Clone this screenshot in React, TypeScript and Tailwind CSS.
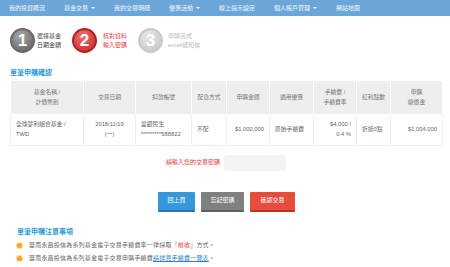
import React from 'react';

const navItems = [
  { label: '我的投資概況', caret: false },
  { label: '基金交易', caret: true },
  { label: '我的交易明細', caret: false },
  { label: '優惠活動', caret: true },
  { label: '線上提示設定', caret: false },
  { label: '個人帳戶管理', caret: true },
  { label: '網站地圖', caret: false },
];

const Caret = () => (
  <span className="ml-[3px] inline-block h-0 w-0 border-x-[2px] border-t-[2px] border-x-transparent border-t-white/90 align-middle" />
);

type StepProps = {
  num: number;
  lines: [string, string];
  tone: 'done' | 'active' | 'todo';
  className?: string;
};

const Step = ({ num, lines, tone, className }: StepProps) => {
  const circle =
    tone === 'done'
      ? 'border-[#6a6a6a] bg-[radial-gradient(circle_at_40%_30%,#a8a8a8,#5c5c5c)]'
      : tone === 'active'
      ? 'border-[#b52020] bg-[radial-gradient(circle_at_40%_30%,#f07070,#c42424)]'
      : 'border-[#c8c8c8] bg-[radial-gradient(circle_at_40%_30%,#e6e6e6,#c4c4c4)]';
  const text =
    tone === 'done' ? 'text-[#444]' : tone === 'active' ? 'text-[#e53935]' : 'text-[#bdbdbd]';
  return (
    <div className={`flex items-center ${className ?? ''}`}>
      <div
        className={`flex h-[25px] w-[25px] items-center justify-center rounded-full border-[2px] ${circle} text-[17px] font-bold leading-none text-white`}
      >
        {num}
      </div>
      <div className={`text-[6px] leading-[9px] ${text}`}>
        <div>{lines[0]}</div>
        <div>{lines[1]}</div>
      </div>
    </div>
  );
};

const cols = [73, 52, 56, 35, 43, 44, 43, 34, 52];

const headers: React.ReactNode[] = [
  <>基金名稱 /<br />計價幣別</>,
  '交易日期',
  '扣款帳號',
  '配息方式',
  '申購金額',
  '適用優惠',
  <>手續費 /<br />手續費率</>,
  '紅利點數',
  <>申購<br />總價金</>,
];

export default function App() {
  return (
    <div
      className="min-h-screen w-[450px] bg-white text-[#555]"
      style={{ fontFamily: '"Liberation Sans", "Noto Sans CJK TC", sans-serif' }}
    >
      {/* nav */}
      <div className="flex h-[16px] items-center gap-[19px] bg-[#6ca6d9] pl-[9px] text-[6px] text-white/90">
        {navItems.map((n) => (
          <span key={n.label} className="flex items-center whitespace-nowrap">
            {n.label}
            {n.caret && <Caret />}
          </span>
        ))}
      </div>

      {/* steps */}
      <div className="mt-[12px] flex items-center pl-[10px]">
        <Step num={1} lines={['選擇基金', '日期金額']} tone="done" className="w-[62px] gap-[2px]" />
        <Step num={2} lines={['核對資料', '輸入密碼']} tone="active" className="w-[66px] gap-[6px]" />
        <Step num={3} lines={['申購完成', 'email通知信']} tone="todo" className="gap-[5px]" />
      </div>

      {/* title */}
      <div className="ml-[10px] mt-[15px] text-[7px] font-bold leading-[10px] text-[#2a9ad6]">單筆申購確認</div>

      {/* table */}
      <table className="ml-[10px] mt-[3px] w-[432px] table-fixed border-collapse text-[5.8px] leading-[10px]">
        <colgroup>
          {cols.map((w, i) => (
            <col key={i} style={{ width: w }} />
          ))}
        </colgroup>
        <thead>
          <tr className="h-[32px] bg-[#eeeeee] text-[#777]">
            {headers.map((h, i) => (
              <th key={i} className="border-x border-white text-center font-normal">
                {h}
              </th>
            ))}
          </tr>
        </thead>
        <tbody>
          <tr className="h-[32px] border border-[#eeeeee] text-[#666]">
            <td className="border border-[#eeeeee] pl-[5px] text-left">全球夢利組合基金 /<br />TWD</td>
            <td className="border border-[#eeeeee] text-center">2018/11/19<br />(一)</td>
            <td className="border border-[#eeeeee] pl-[5px] text-left">華銀民生<br />*********588822</td>
            <td className="border border-[#eeeeee] pl-[5px] text-left">不配</td>
            <td className="border border-[#eeeeee] pr-[5px] text-right">$1,000,000</td>
            <td className="border border-[#eeeeee] pl-[5px] text-left">原始手續費</td>
            <td className="border border-[#eeeeee] pr-[5px] text-right">$4,000 /<br />0.4 %</td>
            <td className="border border-[#eeeeee] pl-[5px] text-left">折抵0點</td>
            <td className="border border-[#eeeeee] pr-[5px] text-right">$1,004,000</td>
          </tr>
        </tbody>
      </table>

      {/* password */}
      <div className="mt-[9px] flex items-center justify-center gap-[4px] pl-[2px]">
        <span className="text-[6px] text-[#e53935]">請輸入您的交易密碼</span>
        <input type="password" className="h-[16px] w-[62px] rounded-[3px] bg-[#f4f4f4] outline-none" />
      </div>

      {/* buttons */}
      <div className="mt-[21px] flex justify-center gap-[6px] pl-[3px] text-[6px] text-white">
        <button className="h-[20px] w-[37px] rounded-[1px] border-b-[2px] border-[#2878b5] bg-[#3498db]">回上頁</button>
        <button className="h-[20px] w-[43px] rounded-[1px] border-b-[2px] border-[#5f6161] bg-[#7f8181]">忘記密碼</button>
        <button className="h-[20px] w-[45px] rounded-[1px] border-b-[2px] border-[#bd3426] bg-[#e74c3c]">確認交易</button>
      </div>

      {/* notes */}
      <div className="ml-[17px] mt-[15px] text-[7px] font-bold leading-[10px] text-[#2a9ad6]">單筆申購注意事項</div>
      <ul className="ml-[17px] mt-[2px] text-[6px] leading-[13px] tracking-[0.2px] text-[#666]">
        <li className="flex items-center gap-[7px]">
          <span className="h-[5px] w-[5px] rounded-full bg-[#f5a623] ring-1 ring-[#fbd9a0]" />
          <span>
            華南永昌投信為系列基金電子交易手續費率一律採取
            <span className="text-[#e53935]">『前收』</span>方式。
          </span>
        </li>
        <li className="flex items-center gap-[7px]">
          <span className="h-[5px] w-[5px] rounded-full bg-[#f5a623] ring-1 ring-[#fbd9a0]" />
          <span>
            華南永昌投信為系列基金電子交易申購手續費
            <a className="text-[#2a7fd4] underline">請詳見手續費一覽表</a>。
          </span>
        </li>
      </ul>
    </div>
  );
}
